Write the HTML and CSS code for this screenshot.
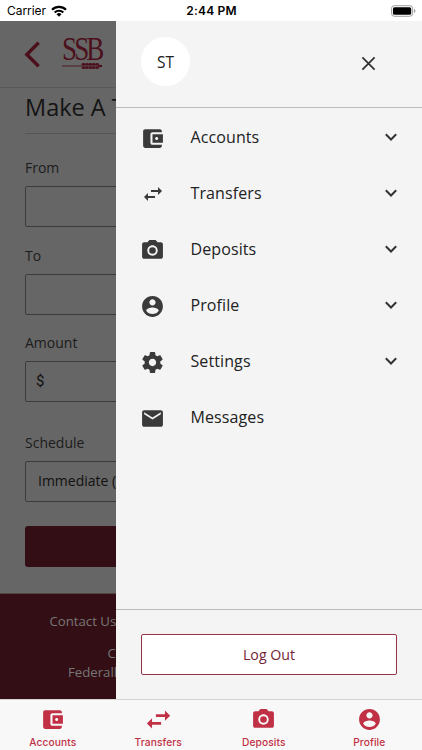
FILE: index.html
```html
<!DOCTYPE html>
<html lang="en">
<head>
<meta charset="utf-8">
<title>Make A Transfer</title>
<link rel="stylesheet" href="styles.css">
</head>
<body>
<svg width="0" height="0" class="defs">
  <symbol id="wallet" viewBox="0 0 24 24"><path fill-rule="evenodd" d="M21 18v1c0 1.100-.9 2-2 2H5c-1.110 0-2-.9-2-2V5c0-1.100.89-2 2-2h14c1.100 0 2 .9 2 2v1h-9c-1.110 0-2 .9-2 2v8c0 1.100.89 2 2 2h9zm-9-2h10V8H12v8zm4-2.500c-.83 0-1.500-.67-1.500-1.500s.67-1.500 1.500-1.500 1.500.67 1.500 1.500-.67 1.500-1.500 1.500z"/></symbol>
  <symbol id="arrows" viewBox="0 0 24 24"><path d="M7 11 3 15l4 4v-3h7v-2H7v-3zm14-2-4-4v3h-7v2h7v3l4-4z"/></symbol>
  <symbol id="camera" viewBox="0 0 24 24"><path d="M15.200 12a3.200 3.200 0 1 1-6.400 0 3.200 3.200 0 0 1 6.400 0z"/><path fill-rule="evenodd" d="M9 2 7.170 4H4c-1.100 0-2 .9-2 2v12c0 1.100.9 2 2 2h16c1.100 0 2-.9 2-2V6c0-1.100-.9-2-2-2h-3.170L15 2H9zm3 15c-2.760 0-5-2.240-5-5s2.240-5 5-5 5 2.240 5 5-2.240 5-5 5z"/></symbol>
  <symbol id="person" viewBox="0 0 24 24"><path d="M12 2C6.480 2 2 6.480 2 12s4.480 10 10 10 10-4.480 10-10S17.520 2 12 2zm0 3c1.660 0 3 1.340 3 3s-1.340 3-3 3-3-1.340-3-3 1.340-3 3-3zm0 14.200c-2.500 0-4.710-1.280-6-3.220.03-1.990 4-3.080 6-3.080 1.990 0 5.970 1.090 6 3.080-1.290 1.940-3.500 3.220-6 3.220z"/></symbol>
  <symbol id="gear" viewBox="0 0 24 24"><path d="M19.430 12.980c.04-.32.07-.64.07-.98s-.03-.66-.07-.98l2.110-1.650c.19-.15.24-.42.120-.64l-2-3.460c-.12-.22-.39-.3-.61-.22l-2.490 1c-.52-.4-1.080-.73-1.690-.98l-.38-2.650C14.460 2.180 14.250 2 14 2h-4c-.25 0-.46.18-.49.42l-.38 2.650c-.61.25-1.170.59-1.690.98l-2.490-1c-.23-.09-.49 0-.61.22l-2 3.460c-.13.22-.07.49.12.64l2.110 1.650c-.04.32-.07.65-.07.98s.03.66.07.98l-2.110 1.650c-.19.15-.24.42-.12.64l2 3.460c.12.22.39.3.61.22l2.490-1c.52.4 1.080.73 1.690.98l.38 2.650c.03.24.24.42.49.42h4c.25 0 .46-.18.49-.42l.38-2.650c.61-.25 1.170-.59 1.690-.98l2.490 1c.23.09.49 0 .61-.22l2-3.460c.12-.22.07-.49-.12-.64l-2.110-1.650zM12 15.500c-1.930 0-3.500-1.570-3.500-3.500s1.570-3.500 3.500-3.500 3.500 1.570 3.500 3.500-1.570 3.500-3.500 3.500z"/></symbol>
  <symbol id="mail" viewBox="0 0 24 24"><path d="M20 4H4c-1.100 0-1.990.9-1.990 2L2 18c0 1.100.9 2 2 2h16c1.100 0 2-.9 2-2V6c0-1.100-.9-2-2-2zm0 4-8 5-8-5V6l8 5 8-5v2z"/></symbol>
  <symbol id="chevron" viewBox="0 0 14 14"><path d="m1.800 4.300 5.200 5.200 5.200-5.200" fill="none" stroke="currentColor" stroke-width="2"/></symbol>
</svg>
<header class="status">
  <div class="carrier"><span>Carrier</span>
    <svg class="wifi" viewBox="0 0 16 12"><g fill="none" stroke="#000" stroke-width="2.200"><path d="M1 4.700a10 10 0 0 1 14 0"/><path d="M3.700 7.500a6.200 6.200 0 0 1 8.600 0"/></g><path d="M5.500 9.200a3.600 3.600 0 0 1 5 0L8 11.800z"/></svg>
  </div>
  <div class="clock">2:44 PM</div>
  <svg class="battery" viewBox="0 0 26 12"><rect x=".5" y=".5" width="22" height="11" rx="3" fill="none" stroke="#999"/><rect x="2" y="2" width="19" height="8" rx="1.700"/><path d="M24 4v4q1.400-.6 1.400-2T24 4z" fill="#999"/></svg>
</header>
<main class="app">
  <section class="page">
    <div class="topbar">
      <svg class="back" viewBox="0 0 18 28"><path d="M15.500 1.500 3 14l12.500 12.500" fill="none" stroke="#4b101c" stroke-width="3.600"/></svg>
      <div class="logo"><span class="ssb">SSB</span>
        <svg class="wheat" viewBox="0 0 42 8"><path d="M0 4h41" stroke="#4b101c" stroke-width=".9"/><g fill="#4b101c"><ellipse cx="22" cy="2.300" rx="1.900" ry="1.300"/><ellipse cx="25.500" cy="2.300" rx="1.900" ry="1.300"/><ellipse cx="29" cy="2.300" rx="1.900" ry="1.300"/><ellipse cx="32.500" cy="2.300" rx="1.900" ry="1.300"/><ellipse cx="36" cy="2.300" rx="1.900" ry="1.300"/><ellipse cx="22" cy="5.700" rx="1.900" ry="1.300"/><ellipse cx="25.500" cy="5.700" rx="1.900" ry="1.300"/><ellipse cx="29" cy="5.700" rx="1.900" ry="1.300"/><ellipse cx="32.500" cy="5.700" rx="1.900" ry="1.300"/><ellipse cx="36" cy="5.700" rx="1.900" ry="1.300"/><ellipse cx="39" cy="4" rx="2.200" ry="1.200"/></g></svg>
      </div>
    </div>
    <div class="form">
      <h1>Make A Transfer</h1>
      <div class="field"><label>From</label><div class="input"></div></div>
      <div class="field"><label>To</label><div class="input"></div></div>
      <div class="field amount"><label>Amount</label><div class="input money">$</div></div>
      <div class="field"><label>Schedule</label><div class="input select">Immediate (One Time)</div></div>
      <div class="submit"></div>
    </div>
    <footer class="footer">
      <p class="contact">Contact Us</p>
      <p class="line-c">C</p>
      <p class="line-f">Federally</p>
    </footer>
  </section>
  <aside class="drawer">
    <div class="drawer-head">
      <div class="avatar">ST</div>
      <svg class="close" viewBox="0 0 16 16"><path d="m1.500 1.500 13 13m0-13-13 13" stroke="#333" stroke-width="1.900"/></svg>
    </div>
    <nav class="menu">
      <div class="item"><svg class="icon"><use href="#wallet"/></svg><span>Accounts</span><svg class="chev"><use href="#chevron"/></svg></div>
      <div class="item"><svg class="icon arrows"><use href="#arrows"/></svg><span>Transfers</span><svg class="chev"><use href="#chevron"/></svg></div>
      <div class="item"><svg class="icon"><use href="#camera"/></svg><span>Deposits</span><svg class="chev"><use href="#chevron"/></svg></div>
      <div class="item"><svg class="icon"><use href="#person"/></svg><span>Profile</span><svg class="chev"><use href="#chevron"/></svg></div>
      <div class="item"><svg class="icon"><use href="#gear"/></svg><span>Settings</span><svg class="chev"><use href="#chevron"/></svg></div>
      <div class="item"><svg class="icon"><use href="#mail"/></svg><span>Messages</span></div>
    </nav>
    <div class="drawer-foot"><div class="logout">Log Out</div></div>
  </aside>
</main>
<nav class="tabs">
  <div class="tab"><svg class="icon"><use href="#wallet"/></svg><span>Accounts</span></div>
  <div class="tab"><svg class="icon wide"><use href="#arrows"/></svg><span>Transfers</span></div>
  <div class="tab"><svg class="icon"><use href="#camera"/></svg><span>Deposits</span></div>
  <div class="tab"><svg class="icon"><use href="#person"/></svg><span>Profile</span></div>
</nav>
</body>
</html>
```
FILE: styles.css
```css
* { box-sizing: border-box; }
body {
  margin: 0;
  width: 422px;
  height: 750px;
  overflow: hidden;
  display: flex;
  flex-direction: column;
  background: #fff;
  color: #222;
  font-family: "Open Sans", "Noto Sans", sans-serif;
}
h1, p { margin: 0; font-weight: 400; }
svg { display: block; flex: none; }
.defs { display: none; }

.status {
  height: 21px;
  flex: none;
  display: grid;
  grid-template-columns: 1fr auto 1fr;
  align-items: center;
  padding: 0 6px 0 7px;
  color: #000;
  font-family: Inter, sans-serif;
  font-size: 12px;
}
.carrier { display: flex; align-items: center; gap: 5px; letter-spacing: -0.050px; }
.wifi { width: 16px; height: 12px; }
.clock { font-weight: 600; letter-spacing: 0.2px; }
.battery { width: 25px; height: 12px; justify-self: end; }

.app { height: 678px; flex: none; display: flex; }
.page {
  width: 116px;
  flex: none;
  overflow: hidden;
  background: #666;
  color: #1c1c1c;
  white-space: nowrap;
}
.topbar {
  height: 67px;
  display: flex;
  align-items: center;
  padding-left: 24px;
  gap: 21px;
  border-bottom: 1px solid #595959;
}
.back { width: 17px; height: 27px; }
.logo { width: 41px; height: 32px; color: #4b101c; }
.ssb {
  display: block;
  width: 50px;
  height: 24px;
  line-height: 23px;
  font-family: "Liberation Serif", serif;
  font-size: 33px;
  letter-spacing: -3.500px;
  transform: scaleX(0.82);
  transform-origin: 0 0;
}
.wheat { width: 41px; height: 8px; }
.form { height: 505px; padding: 0 0 0 25px; }
h1 {
  height: 46px;
  margin-bottom: 22px;
  border-bottom: 1px solid #555;
  font-size: 23.500px;
  line-height: 38px;
  color: #141414;
}
.field { height: 87.500px; font-size: 14px; }
.field.amount { height: 100px; }
.field label { display: block; height: 30px; line-height: 24px; }
.input {
  width: 372px;
  height: 41px;
  border: 1px solid #3c3c3c;
  border-radius: 2px;
  padding-left: 12px;
  line-height: 38px;
  color: #111;
}
.money { padding-left: 10px; font-family: Roboto, sans-serif; font-size: 15px; line-height: 39px; }
.submit { width: 372px; height: 41px; margin-top: 7px; background: #330e14; border-radius: 3px; }
.footer {
  height: 106px;
  background: #330e14;
  border-top: 1px solid #54443f;
  color: #777;
  font-size: 13.200px;
  line-height: 19px;
  padding-top: 18px;
}
.contact { padding-left: 49.500px; margin-bottom: 13px; }
.line-c { padding-left: 107.500px; }
.line-f { padding-left: 68px; }

.drawer { flex: 1; display: flex; flex-direction: column; background: #f4f4f4; }
.drawer-head {
  height: 87px;
  flex: none;
  display: flex;
  justify-content: space-between;
  padding: 16px 46px 0 25px;
  border-bottom: 1px solid #bbb;
}
.avatar {
  width: 49px;
  height: 49px;
  border-radius: 50%;
  background: #fff;
  text-align: center;
  line-height: 50px;
  font-size: 15.500px;
}
.close { width: 15px; height: 15px; margin-top: 19px; }
.menu { flex: 1; padding-top: 1px; }
.item { height: 56px; display: flex; align-items: center; padding: 0 24px; font-size: 16px; }
.item .icon { width: 25px; height: 25px; margin: 3px 25.500px 0 0; fill: #3a3a3a; }
.item .arrows { width: 24px; height: 24px; margin: 2px 26px 0 0.500px; }
.item span { flex: 1; letter-spacing: 0.1px; }
.chev { width: 14px; height: 14px; color: #333; }
.drawer-foot { height: 90px; flex: none; padding: 24px 25px; border-top: 1px solid #bbb; }
.logout {
  height: 41px;
  background: #fff;
  border: 1px solid #963447;
  border-radius: 2px;
  text-align: center;
  line-height: 39px;
  font-size: 14.200px;
  color: #742636;
}

.tabs {
  height: 51px;
  flex: none;
  display: grid;
  grid-template-columns: repeat(4, 1fr);
  background: #f8f8f8;
  border-top: 1px solid #d5d5d5;
  color: #c13145;
  font: 500 10.200px/14px Inter, sans-serif;
  letter-spacing: 0.1px;
}
.tab { display: flex; flex-direction: column; align-items: center; padding-top: 7px; }
.tab .icon { width: 25px; height: 25px; margin-bottom: 3px; fill: #c13145; }
.tab .icon.wide { width: 31px; height: 31px; margin: -3px 0 0; }
```
